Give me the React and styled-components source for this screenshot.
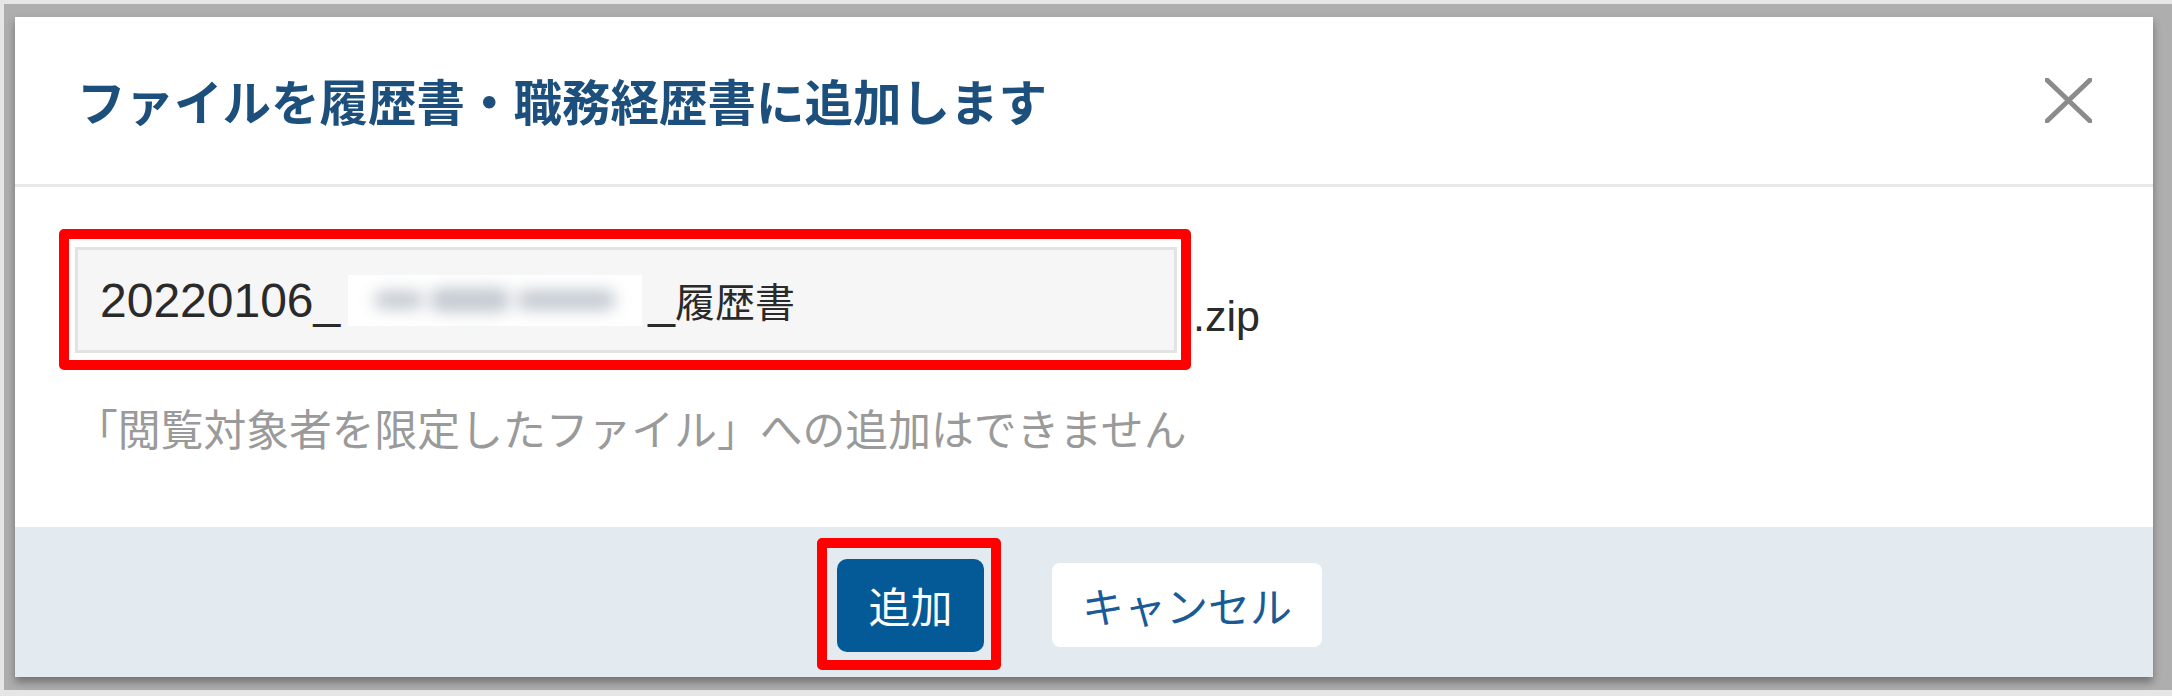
import React from "react";
import styled, { createGlobalStyle } from "styled-components";

const GlobalStyle = createGlobalStyle`
  html, body {
    margin: 0;
    padding: 0;
    background: #e6e6e6;
    width: 2172px;
    height: 696px;
    overflow: hidden;
  }
  body {
    font-family: "Noto Sans CJK JP", "Liberation Sans", sans-serif;
  }
`;

const Frame = styled.div`
  margin: 4px 0 0 4px;
  height: 686px;
  background: #aeaeae;
  box-sizing: border-box;
  padding: 13px 19px 0 11px;
`;

const Dialog = styled.div`
  background: #ffffff;
  height: 660px;
  display: flex;
  flex-direction: column;
  box-shadow: 0 5px 8px rgba(0, 0, 0, 0.35);
`;

const Header = styled.div`
  height: 167px;
  border-bottom: 3px solid #e8e8e8;
  display: flex;
  align-items: center;
  justify-content: space-between;
  padding: 0 61px 0 62px;
`;

const Title = styled.h1`
  margin: 0;
  font-family: "Noto Sans CJK JP", sans-serif;
  font-weight: 700;
  font-size: 48.5px;
  line-height: 1;
  color: #1d4f7c;
  letter-spacing: 0;
`;

const CloseButton = styled.button`
  border: 0;
  background: none;
  padding: 0;
  width: 47px;
  height: 45px;
  display: flex;
  align-items: center;
  justify-content: center;
  cursor: pointer;
`;

const Body = styled.div`
  flex: 1;
  padding: 60px 60px 0 60px;
  display: flex;
  flex-direction: column;
`;

const FieldRow = styled.div`
  display: flex;
  align-items: center;
  gap: 16px;
`;

const Highlighted = styled.div`
  position: relative;
  &::after {
    content: "";
    position: absolute;
    top: ${(p) => p.$t}px;
    right: ${(p) => p.$r}px;
    bottom: ${(p) => p.$b}px;
    left: ${(p) => p.$l}px;
    border: 10px solid #ff0000;
    border-radius: 5px;
    pointer-events: none;
  }
`;

const TextField = styled.div`
  width: 1102px;
  height: 106px;
  box-sizing: border-box;
  border: 3px solid #e3e3e3;
  background: #f6f6f6;
  padding-left: 22px;
  display: flex;
  align-items: center;
  font-family: "Liberation Sans", "Noto Sans CJK JP", sans-serif;
  font-size: 48px;
  color: #2a2a2a;
  white-space: nowrap;
`;

const Masked = styled.span`
  display: inline-flex;
  align-items: center;
  justify-content: center;
  gap: 6px;
  width: 294px;
  height: 51px;
  margin: 0 6px 0 8px;
  background: #ffffff;
  overflow: hidden;
`;

const Smudge = styled.span`
  display: block;
  width: ${(p) => p.$w}px;
  height: ${(p) => p.$h}px;
  border-radius: 10px;
  background: #c2c9d0;
  filter: blur(8px);
`;

const CjkPart = styled.span`
  font-family: "Noto Sans CJK JP", sans-serif;
  font-size: 40px;
`;

const Ext = styled.span`
  font-family: "Liberation Sans", sans-serif;
  font-size: 43px;
  line-height: 1;
  color: #2a2a2a;
  padding-top: 32px;
`;

const Note = styled.p`
  margin: 42px 0 0 0;
  font-family: "Noto Sans CJK JP", sans-serif;
  font-size: 42.8px;
  line-height: 64px;
  color: #9a9a9a;
`;

const Footer = styled.div`
  height: 150px;
  box-sizing: border-box;
  background: #e3eaf0;
  display: flex;
  justify-content: center;
  align-items: center;
  gap: 68px;
  padding: 6px 9px 0 0;
`;

const Button = styled.button`
  border: 0;
  border-radius: ${(p) => (p.$primary ? 10 : 8)}px;
  height: ${(p) => (p.$primary ? 93 : 84)}px;
  width: ${(p) => (p.$primary ? 147 : 270)}px;
  background: ${(p) => (p.$primary ? "#035a96" : "#ffffff")};
  color: ${(p) => (p.$primary ? "#ffffff" : "#1a5a96")};
  font-family: "Noto Sans CJK JP", sans-serif;
  font-size: 42px;
  line-height: 1;
  padding: 0;
  display: flex;
  align-items: center;
  justify-content: center;
  cursor: pointer;
`;

export default function App() {
  return (
    <>
      <GlobalStyle />
      <Frame>
        <Dialog>
          <Header>
            <Title>ファイルを履歴書・職務経歴書に追加します</Title>
            <CloseButton aria-label="閉じる">
              <svg width="47" height="45" viewBox="0 0 47 45">
                <path
                  d="M2 2 L45 43 M45 2 L2 43"
                  stroke="#8b8b8b"
                  strokeWidth="5"
                  strokeLinecap="round"
                  fill="none"
                />
              </svg>
            </CloseButton>
          </Header>
          <Body>
            <FieldRow>
              <Highlighted $t={-18} $r={-14} $b={-17} $l={-16}>
                <TextField>
                  20220106_
                  <Masked aria-hidden="true">
                    <Smudge $w={50} $h={18} />
                    <Smudge $w={80} $h={24} />
                    <Smudge $w={100} $h={20} />
                  </Masked>
                  _<CjkPart>履歴書</CjkPart>
                </TextField>
              </Highlighted>
              <Ext>.zip</Ext>
            </FieldRow>
            <Note>「閲覧対象者を限定したファイル」への追加はできません</Note>
          </Body>
          <Footer>
            <Highlighted $t={-21} $r={-17} $b={-18} $l={-20}>
              <Button $primary>追加</Button>
            </Highlighted>
            <Button>キャンセル</Button>
          </Footer>
        </Dialog>
      </Frame>
    </>
  );
}
